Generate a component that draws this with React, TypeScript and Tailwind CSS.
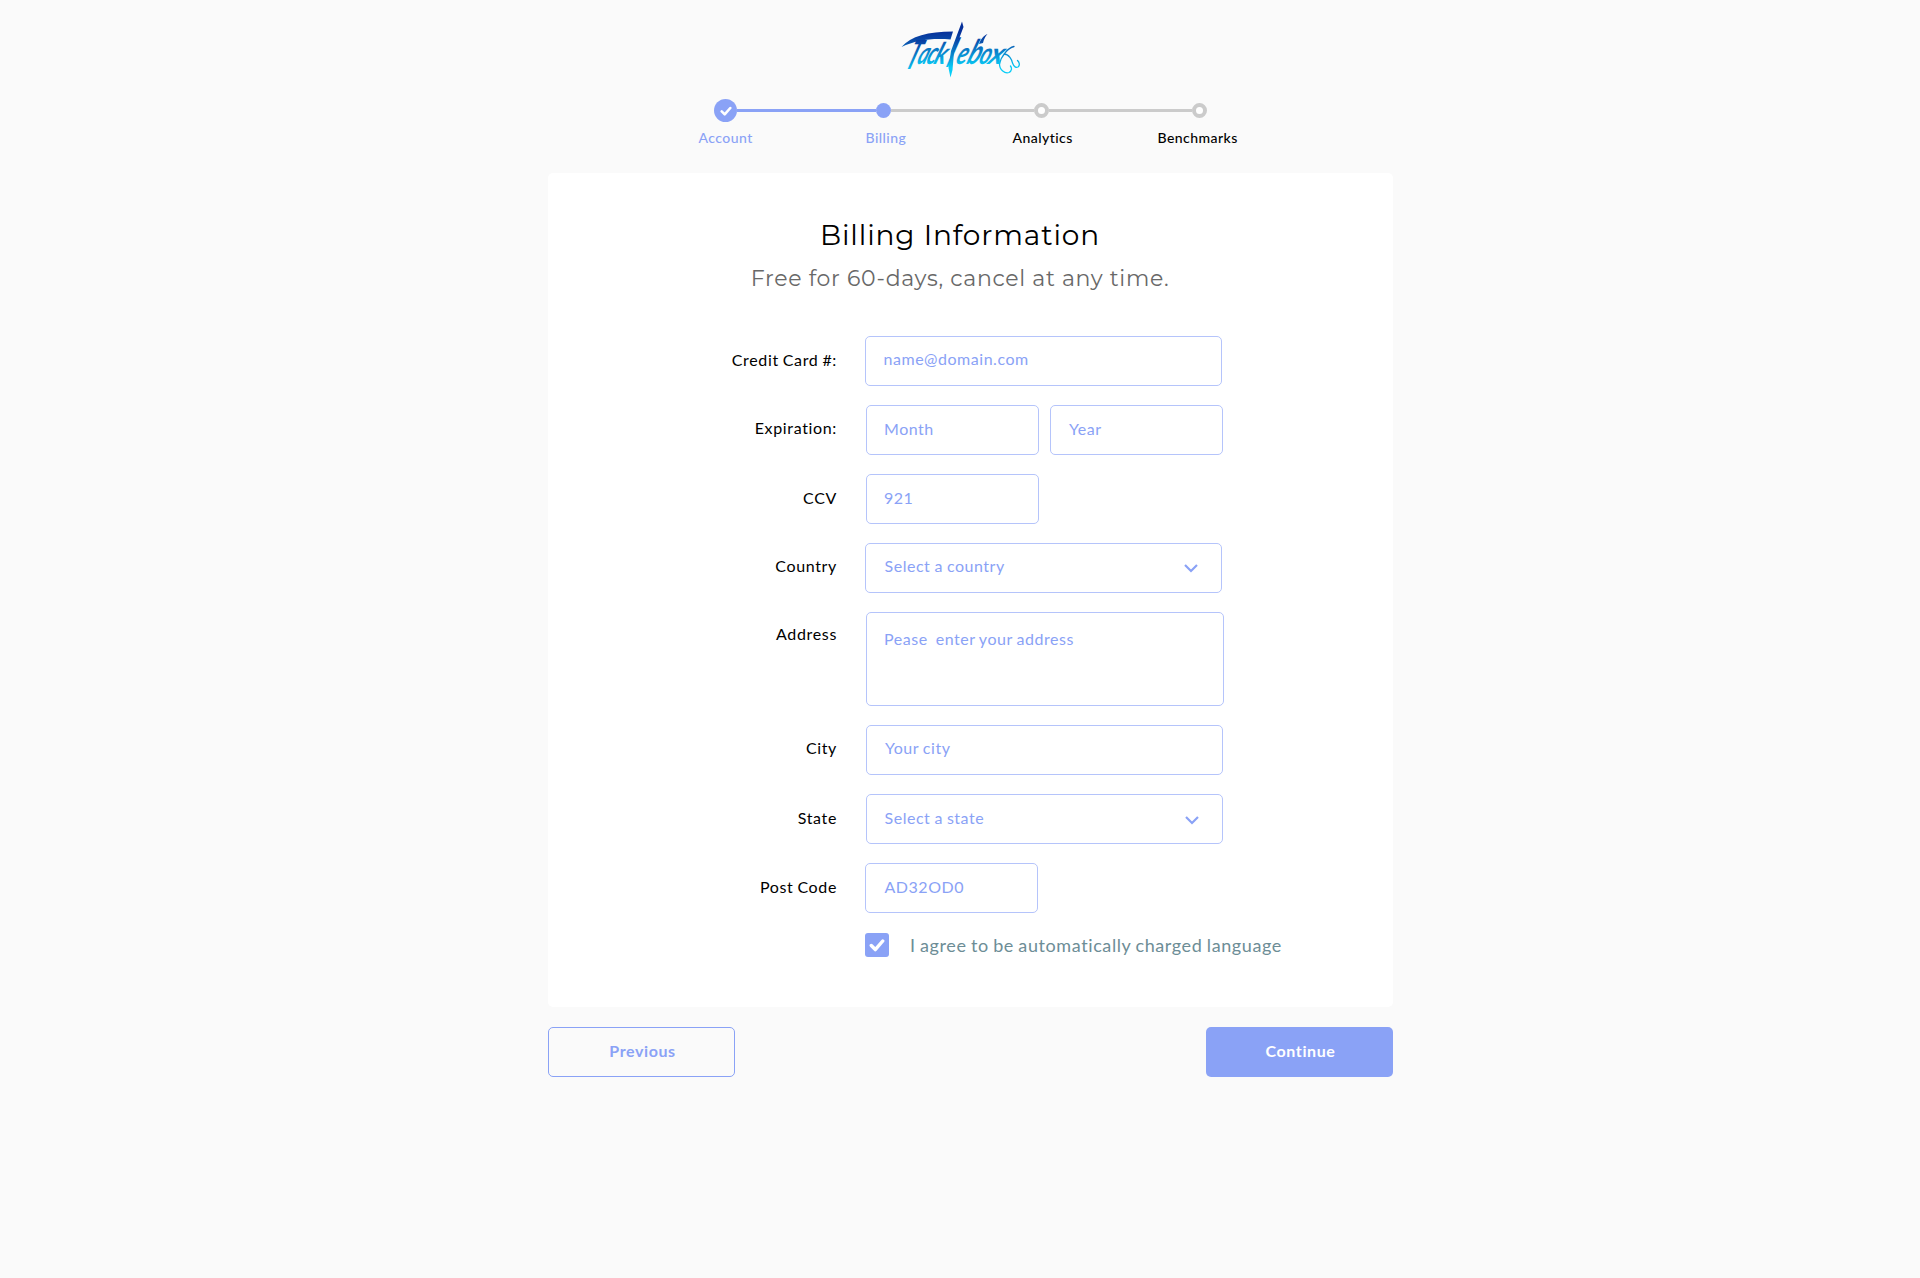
import React from "react";

const steps = [
  { label: "Account", pos: "left-[28.500px]", text: "text-[#8aa2f6]" },
  { label: "Billing", pos: "left-[195.500px]", text: "text-[#8aa2f6]" },
  { label: "Analytics", pos: "left-[342.500px]", text: "text-black" },
  { label: "Benchmarks", pos: "left-[487.500px]", text: "text-black" },
];

const logoLetters = [
  { ch: "T", x: 24, y: 59, size: 40, sx: 0.5 },
  { ch: "a", x: 36, y: 54, size: 31, sx: 0.62 },
  { ch: "c", x: 45, y: 54, size: 31, sx: 0.64 },
  { ch: "k", x: 52.5, y: 54, size: 30, sx: 0.78 },
  { ch: "l", x: 65.5, y: 57, size: 40, sx: 0.45 },
  { ch: "e", x: 74.5, y: 54, size: 31, sx: 0.7 },
  { ch: "b", x: 85.5, y: 54, size: 34, sx: 0.7 },
  { ch: "o", x: 97.5, y: 54, size: 30, sx: 0.7 },
  { ch: "x", x: 107, y: 54, size: 30, sx: 0.95 },
];

function Logo() {
  return (
    <svg className="overflow-visible" width="120" height="60" viewBox="20 8 120 60" role="img" aria-label="Tacklebox">
      <defs>
        <linearGradient id="ink" gradientUnits="userSpaceOnUse" x1="0" y1="22" x2="0" y2="62">
          <stop offset="0" stopColor="#06309a" />
          <stop offset="0.25" stopColor="#0a50ac" />
          <stop offset="0.6" stopColor="#0a96d6" />
          <stop offset="0.9" stopColor="#07cdf7" />
        </linearGradient>
        <linearGradient id="letters" gradientUnits="userSpaceOnUse" x1="0" y1="-32" x2="0" y2="2">
          <stop offset="0" stopColor="#06309a" />
          <stop offset="0.35" stopColor="#0a60b6" />
          <stop offset="0.7" stopColor="#0a96d6" />
          <stop offset="1" stopColor="#07cdf7" />
        </linearGradient>
      </defs>
      <g fill="url(#ink)">
        <path d="M21.500 37 C31 26 48 21.500 73 21.500 L70.500 29.500 C52 28 36 30 21.500 37Z" />
        <path d="M82 11.500 L83.500 17 L74 42 L72.500 60 L70.500 67.500 L68.500 58 L71 41Z" />
        <path d="M107.500 24 C103 26 101 29 99 34 L103 33 C104 29 105 27 107.500 24Z" />
      </g>
      <path
        d="M134 36.500 C128 38 121 46 119.500 54 C119.500 60 125 64 129 62.500 C132 61 132 58 130.500 56 M124 44 C129 44 132 50 132.500 53 C134 57 136 58 138 57 C140.500 55 139 52 137.500 50.500"
        fill="none"
        stroke="url(#ink)"
        strokeWidth="1.300"
        strokeLinecap="round"
      />
      <g fill="url(#letters)" fontFamily="Lato, sans-serif" fontStyle="italic" fontWeight="700">
        {logoLetters.map((l) => (
          <text key={l.ch} fontSize={l.size} transform={`translate(${l.x} ${l.y}) skewX(-21) scale(${l.sx} 1)`}>
            {l.ch}
          </text>
        ))}
      </g>
    </svg>
  );
}

function Tick({ size }: { size: number }) {
  return (
    <svg width={size} height={size} viewBox="0 0 14 14" fill="none" stroke="#fff" strokeWidth="3">
      <path d="M2 7.500 L5.500 11 L12 3.500" strokeLinecap="round" strokeLinejoin="round" />
    </svg>
  );
}

function Stepper() {
  return (
    <nav className="mt-[16px] ml-[670px] h-[54px] w-[600px]">
      <div className="ml-[44px] flex h-[23px] items-center">
        <span className="flex size-[23px] items-center justify-center rounded-full bg-[#8aa2f6]">
          <Tick size={12} />
        </span>
        <span className="h-[3px] w-[139px] bg-[#8aa2f6]" />
        <span className="size-[15px] rounded-full bg-[#8aa2f6]" />
        <span className="h-[3px] w-[143px] bg-[#cbcbcb]" />
        <span className="size-[15px] rounded-full border-4 border-[#cbcbcb] bg-white" />
        <span className="h-[3px] w-[143px] bg-[#cbcbcb]" />
        <span className="size-[15px] rounded-full border-4 border-[#cbcbcb] bg-white" />
      </div>
      <div className="relative mt-[7px] h-[18px] text-[14px] leading-[18px] font-medium tracking-[0.450px]">
        {steps.map((s) => (
          <span key={s.label} className={`absolute top-0 whitespace-nowrap ${s.pos} ${s.text}`}>
            {s.label}
          </span>
        ))}
      </div>
    </nav>
  );
}

function Row({ label, labelPad, offset, children }: { label: string; labelPad: string; offset: string; children: React.ReactNode }) {
  return (
    <div className="flex items-start">
      <div className={`w-[289px] shrink-0 text-right leading-5 tracking-[0.650px] [word-spacing:-0.800px] text-black ${labelPad}`}>{label}</div>
      <div className={`flex shrink-0 gap-[11px] ${offset}`}>{children}</div>
    </div>
  );
}

function Field({ text, className, select }: { text: string; className: string; select?: boolean }) {
  return (
    <div className={`flex shrink-0 justify-between rounded-[5px] border border-[#b5c4fb] leading-5 whitespace-pre tracking-[0.530px] [word-spacing:-0.600px] text-[#8aa2f6] ${className}`}>
      <span>{text}</span>
      {select && (
        <svg className="mt-[5px] mr-[23px]" width="14" height="14" viewBox="0 0 14 14" fill="none" stroke="#8aa2f6" strokeWidth="2.200">
          <path d="M1 4 L7 10 L13 4" />
        </svg>
      )}
    </div>
  );
}

export default function App() {
  return (
    <main className="h-[1278px] w-[1920px] overflow-hidden bg-[#fafafa] font-['Lato',sans-serif] text-[16px]">
      <div className="ml-[900px] h-[83px] pt-[18px]">
        <Logo />
      </div>
      <Stepper />
      <section className="mt-[20px] ml-[548px] h-[834px] w-[845px] rounded-[5px] bg-white">
        <header className="w-[824px] pt-[42px] text-center font-['Montserrat','Inter',sans-serif]">
          <h1 className="text-[28px] leading-[40px] tracking-[0.870px] text-black">Billing Information</h1>
          <p className="mt-[6px] text-[22px] leading-[36px] tracking-[0.670px] text-[#686868]">Free for 60-days, cancel at any time.</p>
        </header>
        <div className="mt-[39px] flex flex-col gap-[19px]">
          <Row label="Credit Card #:" labelPad="pt-[14px]" offset="ml-[28px]">
            <Field text="name@domain.com" className="h-[50px] w-[357px] pt-[12px] pl-[17.500px]" />
          </Row>
          <Row label="Expiration:" labelPad="pt-[13px]" offset="ml-[29px]">
            <Field text="Month" className="h-[50px] w-[173px] pt-[13px] pl-[17px]" />
            <Field text="Year" className="h-[50px] w-[173px] pt-[13px] pl-[18px]" />
          </Row>
          <Row label="CCV" labelPad="pt-[14px]" offset="ml-[29px]">
            <Field text="921" className="h-[50px] w-[173px] pt-[13px] pl-[17px]" />
          </Row>
          <Row label="Country" labelPad="pt-[13px]" offset="ml-[28px]">
            <Field text="Select a country" select className="h-[50px] w-[357px] pt-[12px] pl-[18.500px]" />
          </Row>
          <Row label="Address" labelPad="pt-[12px]" offset="ml-[29px]">
            <Field text="Pease  enter your address" className="h-[94px] w-[358px] pt-[16px] pl-[17px]" />
          </Row>
          <Row label="City" labelPad="pt-[13px]" offset="ml-[29px]">
            <Field text="Your city" className="h-[50px] w-[357px] pt-[12px] pl-[18px]" />
          </Row>
          <Row label="State" labelPad="pt-[14px]" offset="ml-[29px]">
            <Field text="Select a state" select className="h-[50px] w-[357px] pt-[13px] pl-[17.500px]" />
          </Row>
          <Row label="Post Code" labelPad="pt-[14px]" offset="ml-[28px]">
            <Field text="AD32OD0" className="h-[50px] w-[173px] pt-[13px] pl-[18.500px]" />
          </Row>
        </div>
        <div className="mt-[20px] ml-[317px] flex h-6 items-center">
          <span className="flex size-6 items-center justify-center rounded-[3px] bg-[#8aa2f6]">
            <Tick size={16} />
          </span>
          <span className="ml-[21px] text-[18px] leading-6 tracking-[0.600px] [word-spacing:-0.800px] text-[#6d8d96]">I agree to be automatically charged language</span>
        </div>
      </section>
      <div className="mt-[20px] ml-[548px] flex w-[845px] justify-between text-[16px] leading-5 font-bold tracking-[0.600px]">
        <button className="h-[50px] w-[187px] rounded-[5px] border border-[#8aa2f6] pb-[3px] pl-[2px] text-[#8aa2f6]">Previous</button>
        <button className="h-[50px] w-[187px] rounded-[5px] bg-[#8aa2f6] pb-[3px] pl-[2px] text-white">Continue</button>
      </div>
    </main>
  );
}
